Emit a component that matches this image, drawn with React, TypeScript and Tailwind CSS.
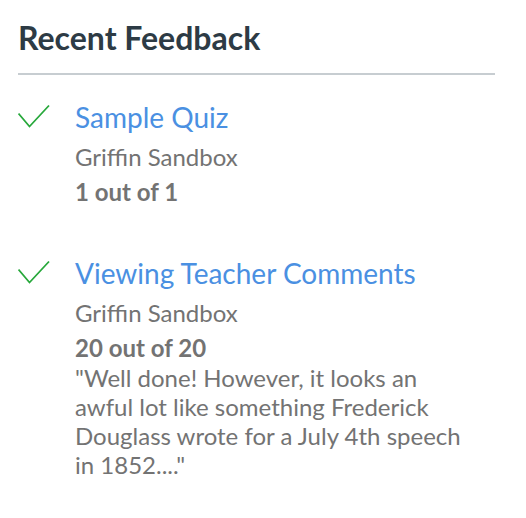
const items = [
  {
    title: 'Sample Quiz',
    course: 'Griffin Sandbox',
    score: '1 out of 1',
    comment: '',
  },
  {
    title: 'Viewing Teacher Comments',
    course: 'Griffin Sandbox',
    score: '20 out of 20',
    comment:
      '"Well done! However, it looks an awful lot like something Frederick Douglass wrote for a July 4th speech in 1852...."',
  },
];

const Check = () => (
  <svg width="32" height="24" viewBox="0 0 32 24" fill="none" className="mt-[3px]">
    <path d="M0.5 9.5 L11.5 22.5 L31 1.5" stroke="#27a83b" strokeWidth="1.8" />
  </svg>
);

const App = () => {
  return (
    <div className="min-h-screen bg-white px-[18px] pt-[18px] font-['Lato','Noto_Sans',sans-serif]">
      <h2 className="text-[32px] leading-[40px] font-bold text-[#2d3b45]">Recent Feedback</h2>
      <div className="mt-[15px] w-[477px] border-t-2 border-[#c7cdd1]" />

      <ul className="mt-[26px] flex flex-col gap-[50px]">
        {items.map((item) => (
          <li key={item.title} className="flex">
            <div className="w-[57px] shrink-0">
              <Check />
            </div>
            <div className="w-[392px]">
              <a className="block text-[28px] leading-[32px] text-[#4a90e2]">{item.title}</a>
              <div className="mt-[9px] text-[24px] leading-[30px] text-[#737373]">{item.course}</div>
              <div className="mt-[5px] text-[24px] leading-[30px] font-bold text-[#737373]">{item.score}</div>
              {item.comment && (
                <p className="text-[24px] leading-[29px] text-[#737373]">{item.comment}</p>
              )}
            </div>
          </li>
        ))}
      </ul>
    </div>
  );
};

export default App;
